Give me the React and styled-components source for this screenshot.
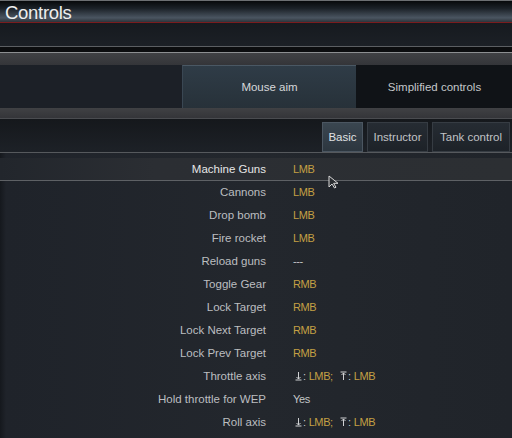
import React from 'react';
import styled, { createGlobalStyle } from 'styled-components';

const GlobalStyle = createGlobalStyle`
  html, body {
    margin: 0;
    padding: 0;
    background: #1e2228;
  }
  body {
    font-family: "Liberation Sans", Arial, sans-serif;
    overflow: hidden;
  }
`;

// Whole window
const Page = styled.div`
  width: 512px;
  height: 438px;
  display: flex;
  flex-direction: column;
  background: linear-gradient(90deg, #15181d 0px, #1f232a 6px, #23272d 50%, #20242a 100%);
  position: relative;
  overflow: hidden;
`;

// Title bar with red underline
const Header = styled.div`
  height: 23px;
  flex: none;
  border-top: 1px solid #6c6f72;
  border-bottom: 1px solid #7a1c1e;
  background: linear-gradient(180deg, #07090b 0%, #1b2127 35%, #4a5561 80%, #2c333a 100%);
  display: flex;
  align-items: center;
  padding-left: 5px;
  box-sizing: border-box;
`;

const Title = styled.h1`
  margin: 0;
  font-size: 18.5px;
  font-weight: normal;
  color: #eeeeee;
  letter-spacing: -0.3px;
  line-height: 22px;
  position: relative;
  top: 1px;
`;

const TopGap = styled.div`
  height: 23px;
  flex: none;
  background: linear-gradient(180deg, #161a1f, #1c2026);
  border-bottom: 1px solid #5c5f63;
`;

const BlackStrip = styled.div`
  height: 5px;
  flex: none;
  background: #0c0d0f;
  border-bottom: 1px solid #8d8f91;
`;

const GrayBand = styled.div`
  height: ${({ h }) => h}px;
  flex: none;
  background: linear-gradient(180deg, #404144, #343539);
`;

// Mode tabs
const TabBar = styled.div`
  height: 43px;
  flex: none;
  display: flex;
  background: #1c2027;
`;

const Spacer = styled.div`
  width: 182px;
  flex: none;
`;

const ModeTab = styled.div`
  flex: ${({ w }) => (w ? `0 0 ${w}px` : '1')};
  display: flex;
  align-items: center;
  justify-content: center;
  font-size: 11.5px;
  color: ${({ active }) => (active ? '#d6d8da' : '#c4c7ca')};
  box-sizing: border-box;
  background: ${({ active }) =>
    active ? 'linear-gradient(180deg, #2f3c47, #273139)' : '#101317'};
  border-top: 1px solid ${({ active }) => (active ? '#4a5864' : '#101317')};
  border-left: 1px solid ${({ active }) => (active ? '#3a4753' : '#101317')};
`;

// Sub tabs
const SubBar = styled.div`
  height: 35px;
  flex: none;
  display: flex;
  justify-content: flex-end;
  align-items: stretch;
  gap: 4px;
  padding: 3px 2px 0 0;
  box-sizing: border-box;
  background: linear-gradient(180deg, #15181c, #1d2127);
  border-top: 1px solid #4a4c50;
  border-bottom: 1px solid #56595d;
`;

const SubTab = styled.div`
  width: ${({ w }) => w}px;
  display: flex;
  align-items: center;
  justify-content: center;
  font-size: 11.5px;
  color: ${({ active }) => (active ? '#e0e2e4' : '#c0c3c6')};
  box-sizing: border-box;
  border: 1px solid ${({ active }) => (active ? '#4b5661' : '#363c43')};
  background: ${({ active }) =>
    active ? 'linear-gradient(180deg, #3a4650, #2c363f)' : 'linear-gradient(180deg, #262c33, #1d2228)'};
`;

// Binding list
const List = styled.div`
  display: flex;
  flex-direction: column;
  padding-top: 5px;
`;

const Row = styled.div`
  height: 23px;
  flex: none;
  display: grid;
  grid-template-columns: 266px 1fr;
  column-gap: 27px;
  align-items: center;
  box-sizing: border-box;
  background: ${({ selected }) =>
    selected ? 'linear-gradient(90deg, #22262c 0%, #2b2e33 30%, #2c2f33 100%)' : 'transparent'};
  border-bottom: 1px solid ${({ selected }) => (selected ? '#5e6165' : 'transparent')};
`;

const Label = styled.div`
  text-align: right;
  font-size: 11.5px;
  color: ${({ selected }) => (selected ? '#e6e6e6' : '#bcbec0')};
  white-space: nowrap;
`;

const Value = styled.div`
  font-size: 11px;
  letter-spacing: -0.4px;
  color: ${({ plain }) => (plain ? '#c4c6c8' : '#c4a044')};
  display: flex;
  align-items: center;
  white-space: nowrap;
`;

const Sep = styled.span`
  color: #c4c6c8;
  margin-right: 3px;
`;

const Cursor = styled.svg`
  position: absolute;
  left: 328px;
  top: 175px;
`;

const AxisIcon = ({ up }) => (
  <svg width="7" height="10" viewBox="0 0 7 10" style={{ marginLeft: 2, marginRight: 1 }}>
    {up ? (
      <g stroke="#cfd1d3" strokeWidth="1" fill="none">
        <line x1="0.5" y1="1" x2="6.5" y2="1" />
        <line x1="3.5" y1="2" x2="3.5" y2="9" />
        <polyline points="1.5,4 3.5,2 5.5,4" />
      </g>
    ) : (
      <g stroke="#cfd1d3" strokeWidth="1" fill="none">
        <line x1="3.5" y1="1" x2="3.5" y2="8" />
        <polyline points="1.5,6 3.5,8 5.5,6" />
        <line x1="0.5" y1="9" x2="6.5" y2="9" />
      </g>
    )}
  </svg>
);

const AxisValue = () => (
  <Value>
    <AxisIcon />
    <Sep>:</Sep>LMB;&nbsp;&nbsp;
    <AxisIcon up />
    <Sep>:</Sep>LMB
  </Value>
);

const rows = [
  ['Machine Guns', 'LMB'],
  ['Cannons', 'LMB'],
  ['Drop bomb', 'LMB'],
  ['Fire rocket', 'LMB'],
  ['Reload guns', '---', true],
  ['Toggle Gear', 'RMB'],
  ['Lock Target', 'RMB'],
  ['Lock Next Target', 'RMB'],
  ['Lock Prev Target', 'RMB'],
  ['Throttle axis', 'axis'],
  ['Hold throttle for WEP', 'Yes', true],
  ['Roll axis', 'axis'],
];

export default function App() {
  return (
    <>
      <GlobalStyle />
      <Page>
        <Header>
          <Title>Controls</Title>
        </Header>
        <TopGap />
        <BlackStrip />
        <GrayBand h={12} />
        <TabBar>
          <Spacer />
          <ModeTab active w={174}>Mouse aim</ModeTab>
          <ModeTab>Simplified controls</ModeTab>
        </TabBar>
        <GrayBand h={10} />
        <SubBar>
          <SubTab active w={41}>Basic</SubTab>
          <SubTab w={61}>Instructor</SubTab>
          <SubTab w={78}>Tank control</SubTab>
        </SubBar>
        <List>
          {rows.map(([label, value, plain], i) => (
            <Row key={label} selected={i === 0}>
              <Label selected={i === 0}>{label}</Label>
              {value === 'axis' ? <AxisValue /> : <Value plain={plain}>{value}</Value>}
            </Row>
          ))}
        </List>
        <Cursor width="12" height="14" viewBox="0 0 12 14">
          <path d="M1 1 L1 12 L4 9 L6.5 13 L8 12.2 L5.6 8.3 L10 8.3 Z" fill="#2a2d31" stroke="#d8d8d8" strokeWidth="1" strokeLinejoin="round" />
        </Cursor>
      </Page>
    </>
  );
}
